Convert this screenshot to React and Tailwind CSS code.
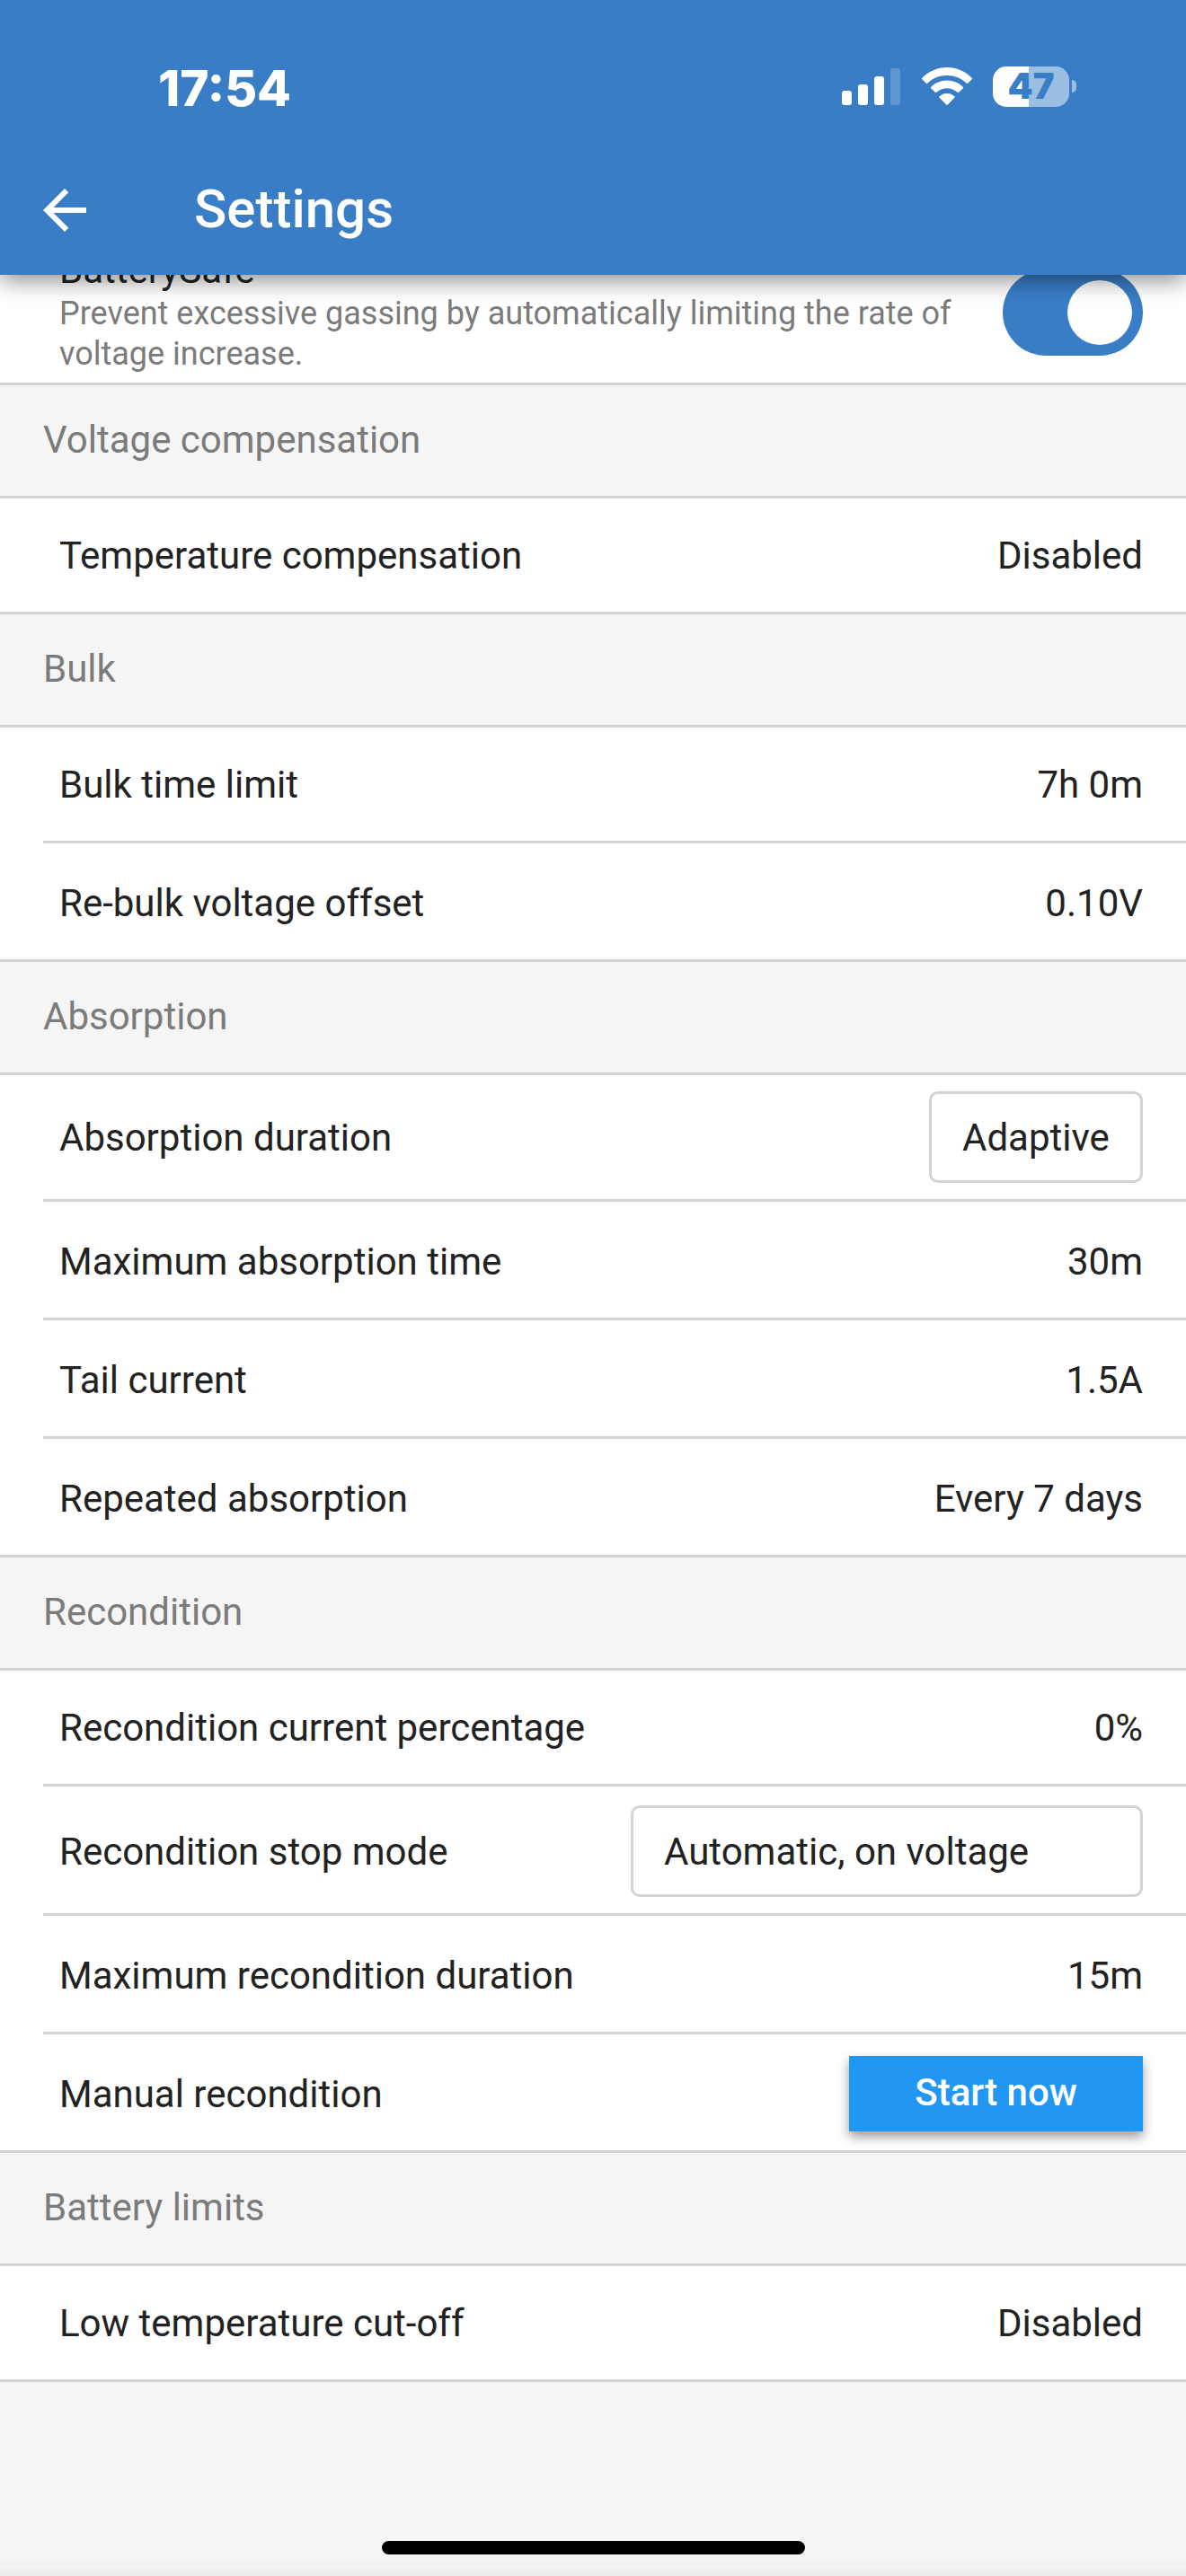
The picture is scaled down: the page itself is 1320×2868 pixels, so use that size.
import { useState } from "react";

function SignalIcon() {
  return (
    <svg width="66" height="42" viewBox="0 0 66 42" fill="#fff" aria-hidden="true">
      <rect x="0" y="26" width="11" height="16" rx="3" />
      <rect x="18" y="19" width="11" height="23" rx="3" />
      <rect x="36" y="10" width="11" height="32" rx="3" />
      <rect x="54" y="1" width="11" height="41" rx="3" opacity="0.2" />
    </svg>
  );
}

function WifiIcon() {
  return (
    <svg width="58" height="42" viewBox="0 0 58 42" fill="#fff" aria-hidden="true">
      <path d="M29 9c8.400 0 16 3.200 21.800 8.800.4.4 1 .4 1.400 0l4.500-4.500c.5-.5.5-1.100 0-1.600C49.400 4.500 39.700 0 29 0S8.600 4.500 1.300 11.700c-.5.5-.5 1.100 0 1.600l4.500 4.500c.4.4 1 .4 1.400 0C13 12.200 20.600 9 29 9z" />
      <path d="M29 23.200c4.500 0 8.600 1.700 11.700 4.600.4.4 1 .4 1.400 0l4.800-4.500c.4-.4.4-1 0-1.400C42.200 17.400 35.900 14.500 29 14.500s-13.200 2.900-17.900 7.400c-.4.4-.4 1 0 1.400l4.800 4.500c.4.4 1 .4 1.400 0 3.100-2.900 7.200-4.600 11.700-4.600z" />
      <path d="M37.400 33.700c.4-.4.4-1 0-1.400C35.200 30.200 32.300 29 29 29s-6.200 1.200-8.400 3.300c-.4.4-.4 1 0 1.400l7.600 7.900c.4.5 1.200.5 1.600 0z" />
    </svg>
  );
}

function Battery() {
  return (
    <div className="flex items-center gap-[3px]">
      <div className="flex h-[45px] w-[85px] items-center justify-center rounded-[15px] bg-[linear-gradient(to_right,#fff_40px,#9dbee3_40px)] font-['Inter'] text-[40px] leading-none font-black text-[#397dc6]">
        47
      </div>
      <div className="h-[14px] w-[5px] rounded-r-full bg-[#9dbee3]" />
    </div>
  );
}

function Header() {
  return (
    <header className="relative z-10 bg-[#397dc6] text-white shadow-[0_6px_24px_rgba(0,0,0,0.45)]">
      <div className="flex h-[162px] items-center justify-between pt-[30px] pr-[122px] pl-[176px]">
        <time className="pt-1 font-['Inter'] text-[55px] leading-[60px] font-extrabold">17:54</time>
        <div className="flex items-center gap-[22px]">
          <SignalIcon />
          <WifiIcon />
          <Battery />
        </div>
      </div>
      <div className="flex h-[144px] items-center gap-[108px] px-9">
        <button type="button" aria-label="Back" className="size-[72px]">
          <svg viewBox="0 0 24 24" className="size-full" fill="currentColor">
            <path d="M20 11H7.830l5.590-5.590L12 4l-8 8 8 8 1.410-1.410L7.830 13H20v-2z" />
          </svg>
        </button>
        <h1 className="pb-0.5 text-[60px] leading-[72px] font-medium">Settings</h1>
      </div>
    </header>
  );
}

function Section({ title, children }) {
  return (
    <section>
      <h2 className="border-y-[3px] border-[#d3d3d3] bg-[#f5f5f5] px-12 pt-[37px] pb-[38px] text-[#7b7b7b]">
        {title}
      </h2>
      <ul className="divide-y-[3px] divide-[#d3d3d3] bg-white pl-12">{children}</ul>
    </section>
  );
}

function Row({ children }) {
  return (
    <li className="not-first:pt-[3px]">
      <div className="flex items-center justify-between pr-12 pl-[18px]">{children}</div>
    </li>
  );
}

function ValueRow({ label, value }) {
  return (
    <Row>
      <span className="pt-10 pb-[38px]">{label}</span>
      <button type="button" aria-label={`${label}: ${value}`} className="pt-10 pb-[38px]">
        {value}
      </button>
    </Row>
  );
}

function SelectRow({ id, label, value, wide }) {
  return (
    <Row>
      <label htmlFor={id} className="pt-0.5">{label}</label>
      <select
        id={id}
        className={`my-[18px] h-[102px] appearance-none rounded-[10px] border-[3px] border-[#d3d3d3] bg-white px-[34px] pt-0.5 ${wide ? "w-[570px]" : ""}`}
      >
        <option>{value}</option>
      </select>
    </Row>
  );
}

export default function App() {
  const [safe, setSafe] = useState(true);
  return (
    <div className="flex min-h-screen flex-col bg-[#f5f5f5] font-['Roboto',sans-serif] text-[42px] leading-[48px] text-[#222]">
      <Header />
      <main className="-mt-9">
        <div className="flex h-[156px] items-center justify-between bg-white pr-12 pl-[66px]">
          <div className="w-[1010px] pb-0.5">
            <label htmlFor="battery-safe">BatterySafe</label>
            <p className="pt-0.5 text-[36px] leading-[45px] text-[#7b7b7b]">
              Prevent excessive gassing by automatically limiting the rate of voltage increase.
            </p>
          </div>
          <input
            id="battery-safe"
            type="checkbox"
            role="switch"
            checked={safe}
            onChange={(e) => setSafe(e.target.checked)}
            className="flex h-24 w-[156px] shrink-0 appearance-none items-center rounded-full bg-gray-300 px-3 before:size-[72px] before:rounded-full before:bg-white checked:justify-end checked:bg-[#397dc6]"
          />
        </div>
        <Section title="Voltage compensation">
          <ValueRow label="Temperature compensation" value="Disabled" />
        </Section>
        <Section title="Bulk">
          <ValueRow label="Bulk time limit" value="7h 0m" />
          <ValueRow label="Re-bulk voltage offset" value="0.10V" />
        </Section>
        <Section title="Absorption">
          <SelectRow id="absorption-duration" label="Absorption duration" value="Adaptive" />
          <ValueRow label="Maximum absorption time" value="30m" />
          <ValueRow label="Tail current" value="1.5A" />
          <ValueRow label="Repeated absorption" value="Every 7 days" />
        </Section>
        <Section title="Recondition">
          <ValueRow label="Recondition current percentage" value="0%" />
          <SelectRow id="stop-mode" label="Recondition stop mode" value="Automatic, on voltage" wide />
          <ValueRow label="Maximum recondition duration" value="15m" />
          <Row>
            <span className="pt-0.5">Manual recondition</span>
            <button
              type="button"
              className="my-[21px] h-[84px] bg-[#2196f3] px-[73px] pb-0.5 font-medium text-white shadow-[0_6px_12px_rgba(0,0,0,0.4)]"
            >
              Start now
            </button>
          </Row>
        </Section>
        <Section title="Battery limits">
          <ValueRow label="Low temperature cut-off" value="Disabled" />
        </Section>
        <div className="border-t-[3px] border-[#d3d3d3]" />
      </main>
      <footer className="mt-auto flex justify-center bg-linear-to-t from-[#ececec] to-[#f5f5f5] to-[20px] pb-6">
        <div className="h-[15px] w-[471px] rounded-full bg-black" />
      </footer>
    </div>
  );
}
